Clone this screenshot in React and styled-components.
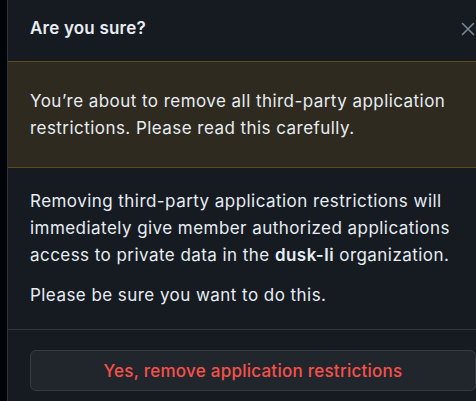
import React from "react";
import styled, { createGlobalStyle } from "styled-components";

const Global = createGlobalStyle`
  html, body {
    margin: 0;
    padding: 0;
    background: #010409;
    overflow: hidden;
  }
  body {
    font-family: Inter, "Liberation Sans", sans-serif;
  }
`;

const Page = styled.div`
  display: flex;
  width: 476px;
  height: 401px;
  padding-left: 7px;
  box-sizing: border-box;
`;

const Dialog = styled.div`
  flex: 1;
  display: flex;
  flex-direction: column;
  background: #161b22;
  border-left: 1px solid #30363d;
  color: #e6edf3;
  overflow: hidden;
`;

const Header = styled.div`
  height: 61px;
  display: flex;
  align-items: center;
  justify-content: space-between;
  padding: 0 0 5px 22px;
  box-sizing: border-box;
`;

const Title = styled.h1`
  margin: 0;
  font-size: 17px;
  font-weight: 600;
  letter-spacing: 0.2px;
`;

const Close = styled.button`
  display: flex;
  align-items: center;
  justify-content: center;
  width: 24px;
  height: 24px;
  padding: 0;
  border: 0;
  background: none;
  color: #7d8590;
  margin: 1px -4px 0 0;
`;

const Flash = styled.div`
  background: #2e2a1f;
  border-top: 1px solid #5e4a1c;
  border-bottom: 1px solid #5e4a1c;
  padding: 26px 22px 25px;
  font-size: 17px;
  line-height: 27px;
  letter-spacing: 0.45px;
`;

const Body = styled.div`
  padding: 20px 22px 20px;
  font-size: 17px;
  line-height: 27px;
  letter-spacing: 0.45px;
  border-bottom: 1px solid #30363d;

  p {
    margin: 0;
  }
  p + p {
    margin-top: 13px;
  }
  b {
    font-weight: 600;
  }
`;

const Footer = styled.div`
  padding: 20px 0 0 22px;
`;

const DangerButton = styled.button`
  width: 446px;
  height: 41px;
  border: 1px solid #363b42;
  border-radius: 6px;
  background: #21262d;
  color: #f85149;
  font-family: inherit;
  font-size: 17px;
  font-weight: 500;
  letter-spacing: 0.25px;
  padding: 0;
`;

export default function App() {
  return (
    <Page>
      <Global />
      <Dialog>
        <Header>
          <Title>Are you sure?</Title>
          <Close aria-label="Close">
            <svg width="14" height="14" viewBox="0 0 14 14" fill="none" stroke="currentColor" strokeWidth="1.6" strokeLinecap="round">
              <path d="M1.5 1.5l11 11M12.5 1.5l-11 11" />
            </svg>
          </Close>
        </Header>
        <Flash>
          You’re about to remove all third-party application restrictions. Please read this carefully.
        </Flash>
        <Body>
          <p>
            Removing third-party application restrictions will immediately give member authorized
            applications access to private data in the <b>dusk-li</b> organization.
          </p>
          <p>Please be sure you want to do this.</p>
        </Body>
        <Footer>
          <DangerButton>Yes, remove application restrictions</DangerButton>
        </Footer>
      </Dialog>
    </Page>
  );
}
